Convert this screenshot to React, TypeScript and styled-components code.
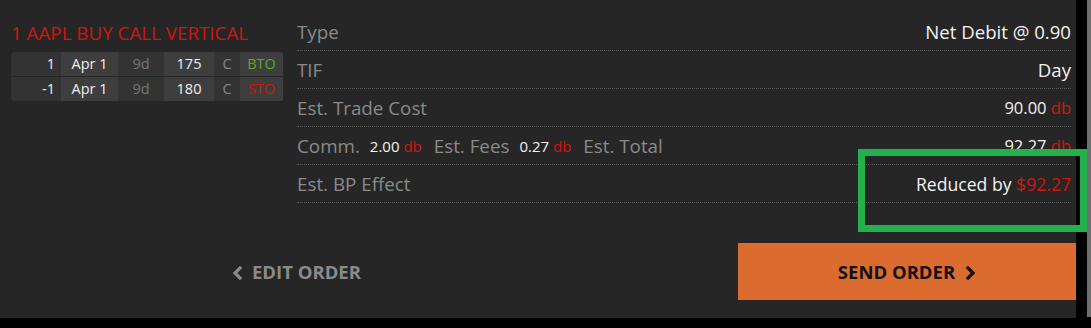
import React from 'react';
import styled, { createGlobalStyle } from 'styled-components';

const GlobalStyle = createGlobalStyle`
  html, body {
    margin: 0;
    padding: 0;
    background: #000;
    font-family: "Open Sans", "Noto Sans", sans-serif;
  }
`;

const Screen = styled.div`
  display: flex;
  width: 1091px;
  height: 328px;
  background: #000;
`;

const Panel = styled.div`
  position: relative;
  width: 1076px;
  height: 318px;
  background: #262626;
  display: flex;
  flex-direction: column;
`;

const EdgeStrip = styled.div`
  margin-left: 11px;
  width: 4px;
  height: 317px;
  background: #6f6f6f;
`;

const Top = styled.div`
  display: flex;
  padding: 13px 5px 0 11px;
`;

const LeftCol = styled.div`
  width: 273px;
  margin-right: 13px;
`;

const Title = styled.div`
  color: #d0160f;
  font-size: 18.8px;
  line-height: 24px;
  padding-top: 8px;
  margin-bottom: 7px;
  white-space: nowrap;
`;

const LegGrid = styled.div`
  display: grid;
  grid-template-columns: 50px 57px 46px 50px 26px 43px;
  gap: 1px 0;
  background: #262626;
  border-radius: 4px;
  overflow: hidden;
`;

const Cell = styled.div<{ $tone: 'dark' | 'light'; $color?: string; $align?: string }>`
  height: 24px;
  line-height: 24px;
  font-size: 14.5px;
  background: ${({ $tone }) => ($tone === 'light' ? '#3e3e3e' : '#333333')};
  color: ${({ $color }) => $color || '#eeeeee'};
  text-align: ${({ $align }) => $align || 'center'};
  padding: ${({ $align }) => ($align === 'right' ? '0 6px 0 0' : '0')};
  box-sizing: border-box;
`;

const RightCol = styled.div`
  flex: 1;
`;

const Row = styled.div`
  display: flex;
  align-items: center;
  height: 37px;
  border-bottom: 1px dotted #5a5a5a;
`;

const Label = styled.span`
  color: #8a8a8a;
  font-size: 18.8px;
  margin-right: 10px;
  white-space: nowrap;
`;

const Value = styled.span<{ $size: number }>`
  margin-left: auto;
  color: #f2f2f2;
  font-size: ${({ $size }) => $size}px;
  white-space: nowrap;
`;

const Inline = styled.span`
  color: #f2f2f2;
  font-size: 15px;
  margin-right: 12px;
  white-space: nowrap;
`;

const Red = styled.span`
  color: #d0160f;
`;

const Bottom = styled.div`
  display: flex;
  align-items: center;
  margin-top: 40px;
  height: 57px;
`;

const EditButton = styled.div`
  display: flex;
  align-items: center;
  gap: 9px;
  margin-left: 232px;
  color: #8a8a8a;
  font-weight: 700;
  font-size: 18.5px;
`;

const SendButton = styled.div`
  margin-left: auto;
  width: 338px;
  height: 57px;
  background: #dc6b2f;
  display: flex;
  align-items: center;
  justify-content: center;
  gap: 10px;
  color: #111;
  font-weight: 700;
  font-size: 18.5px;
`;

const Chevron = styled.svg`
  width: 11px;
  height: 14px;
  margin-top: 2px;
  flex-shrink: 0;
`;

const Highlight = styled.div`
  position: absolute;
  left: 858px;
  top: 149px;
  width: 229px;
  height: 83px;
  border: 7px solid #22b14c;
  box-sizing: border-box;
  pointer-events: none;
`;

const legs = [
  { qty: '1', exp: 'Apr 1', dte: '9d', strike: '175', type: 'C', action: 'BTO', color: '#5aab1e' },
  { qty: '-1', exp: 'Apr 1', dte: '9d', strike: '180', type: 'C', action: 'STO', color: '#d0160f' },
];

function ChevronIcon({ dir }: { dir: 'left' | 'right' }) {
  const points = dir === 'left' ? '8,2 3,7 8,12' : '3,2 8,7 3,12';
  return (
    <Chevron viewBox="0 0 11 14">
      <polyline points={points} fill="none" stroke="currentColor" strokeWidth="3.2" strokeLinecap="square" />
    </Chevron>
  );
}

export default function App() {
  return (
    <>
      <GlobalStyle />
      <Screen>
        <Panel>
          <Top>
            <LeftCol>
              <Title>1 AAPL BUY CALL VERTICAL</Title>
              <LegGrid>
                {legs.map((leg, i) => (
                  <React.Fragment key={i}>
                    <Cell $tone="dark" $align="right">{leg.qty}</Cell>
                    <Cell $tone="light">{leg.exp}</Cell>
                    <Cell $tone="dark" $color="#777">{leg.dte}</Cell>
                    <Cell $tone="light">{leg.strike}</Cell>
                    <Cell $tone="dark" $color="#888">{leg.type}</Cell>
                    <Cell $tone="light" $color={leg.color}>{leg.action}</Cell>
                  </React.Fragment>
                ))}
              </LegGrid>
            </LeftCol>
            <RightCol>
              <Row>
                <Label>Type</Label>
                <Value $size={18.6}>Net Debit @ 0.90</Value>
              </Row>
              <Row>
                <Label>TIF</Label>
                <Value $size={18.6}>Day</Value>
              </Row>
              <Row>
                <Label>Est. Trade Cost</Label>
                <Value $size={16.5}>90.00 <Red>db</Red></Value>
              </Row>
              <Row>
                <Label>Comm.</Label>
                <Inline>2.00 <Red>db</Red></Inline>
                <Label>Est. Fees</Label>
                <Inline>0.27 <Red>db</Red></Inline>
                <Label>Est. Total</Label>
                <Value $size={16.5}>92.27 <Red>db</Red></Value>
              </Row>
              <Row>
                <Label>Est. BP Effect</Label>
                <Value $size={17.6}>Reduced by <Red>$92.27</Red></Value>
              </Row>
            </RightCol>
          </Top>
          <Bottom>
            <EditButton>
              <ChevronIcon dir="left" />
              EDIT ORDER
            </EditButton>
            <SendButton>
              SEND ORDER
              <ChevronIcon dir="right" />
            </SendButton>
          </Bottom>
          <Highlight />
        </Panel>
        <EdgeStrip />
      </Screen>
    </>
  );
}
